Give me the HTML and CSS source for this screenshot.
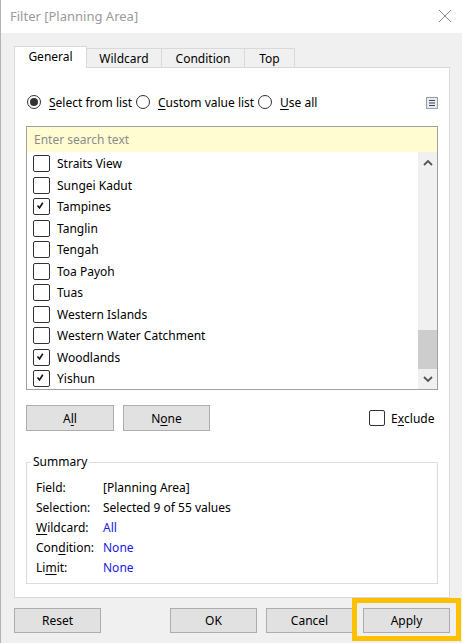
FILE: index.html
```html
<!DOCTYPE html>
<html>
<head>
<meta charset="utf-8">
<link rel="stylesheet" href="styles.css">
</head>
<body>
<div class="window">
  <div class="titlebar">
    <span class="title">Filter [Planning Area]</span>
    <svg class="close" width="14" height="14" viewBox="0 0 14 14"><path d="M1 1 L13 13 M13 1 L1 13" stroke="#8a8a8a" stroke-width="1" fill="none"/></svg>
  </div>
  <div class="content">
    <div class="tabs">
      <div class="tab active t-general">General</div>
      <div class="tab t-wild">Wildcard</div>
      <div class="tab t-cond">Condition</div>
      <div class="tab t-top">Top</div>
    </div>
    <div class="panel">
      <div class="radio-row">
        <label class="opt opt1"><span class="radio on"></span><span><u>S</u>elect from list</span></label>
        <label class="opt opt2"><span class="radio"></span><span><u>C</u>ustom value list</span></label>
        <label class="opt opt3"><span class="radio"></span><span><u>U</u>se all</span></label>
        <svg class="menu-icon" width="12" height="12" viewBox="0 0 12 12"><rect x="0.5" y="0.5" width="11" height="11" fill="#e6e9ee" stroke="#9aa0a8"/><path d="M3 3.5 H9 M3 6 H9 M3 8.5 H9" stroke="#3c4a5c" stroke-width="1.2"/></svg>
      </div>
      <div class="listbox">
        <div class="search">Enter search text</div>
        <div class="list-area">
          <div class="items">
            <div class="item"><span class="cb"></span>Straits View</div>
            <div class="item"><span class="cb"></span>Sungei Kadut</div>
            <div class="item"><span class="cb checked"><svg viewBox="0 0 15 15" width="15" height="15"><path d="M3.5 6.5 L5.5 9 L8.8 3.8" stroke="#111" stroke-width="1.6" fill="none"/></svg></span>Tampines</div>
            <div class="item"><span class="cb"></span>Tanglin</div>
            <div class="item"><span class="cb"></span>Tengah</div>
            <div class="item"><span class="cb"></span>Toa Payoh</div>
            <div class="item"><span class="cb"></span>Tuas</div>
            <div class="item"><span class="cb"></span>Western Islands</div>
            <div class="item"><span class="cb"></span>Western Water Catchment</div>
            <div class="item"><span class="cb checked"><svg viewBox="0 0 15 15" width="15" height="15"><path d="M3.5 6.5 L5.5 9 L8.8 3.8" stroke="#111" stroke-width="1.6" fill="none"/></svg></span>Woodlands</div>
            <div class="item"><span class="cb checked"><svg viewBox="0 0 15 15" width="15" height="15"><path d="M3.5 6.5 L5.5 9 L8.8 3.8" stroke="#111" stroke-width="1.6" fill="none"/></svg></span>Yishun</div>
          </div>
          <div class="scrollbar">
            <div class="sb-btn"><svg width="10" height="7" viewBox="0 0 10 7"><path d="M1 6 L5 2 L9 6" stroke="#555" stroke-width="1.8" fill="none"/></svg></div>
            <div class="sb-track"><div class="sb-thumb"></div></div>
            <div class="sb-btn"><svg width="10" height="7" viewBox="0 0 10 7"><path d="M1 1 L5 5 L9 1" stroke="#555" stroke-width="1.8" fill="none"/></svg></div>
          </div>
        </div>
      </div>
      <div class="btn-row">
        <div class="btn btn-all">A<u>l</u>l</div>
        <div class="btn btn-none">N<u>o</u>ne</div>
        <label class="exclude"><span class="cb cb-ex"></span>E<u>x</u>clude</label>
      </div>
      <fieldset class="summary">
        <legend>Summary</legend>
        <div class="sum-rows">
          <div class="sum-row"><span class="sum-label">Field:</span><span>[Planning Area]</span></div>
          <div class="sum-row"><span class="sum-label">Selection:</span><span>Selected 9 of 55 values</span></div>
          <div class="sum-row"><span class="sum-label"><u>W</u>ildcard:</span><span class="blue">All</span></div>
          <div class="sum-row"><span class="sum-label">Con<u>d</u>ition:</span><span class="blue">None</span></div>
          <div class="sum-row"><span class="sum-label">Li<u>m</u>it:</span><span class="blue">None</span></div>
        </div>
      </fieldset>
    </div>
    <div class="footer">
      <div class="btn fbtn">Reset</div>
      <div class="spacer"></div>
      <div class="btn fbtn">OK</div>
      <div class="btn fbtn btn-cancel">Cancel</div>
      <div class="btn fbtn btn-apply">Apply</div>
    </div>
  </div>
</div>
</body>
</html>
```

FILE: styles.css
```css
* { box-sizing: border-box; }
html, body { margin: 0; padding: 0; }
body {
  width: 462px;
  height: 643px;
  overflow: hidden;
  background: #f0f0f0;
  font-family: "Noto Sans", "Open Sans", sans-serif;
  font-size: 12px;
  color: #000;
}
u { text-decoration: underline; text-underline-offset: 2px; }
.window {
  height: 643px;
  border-left: 1px solid #b4b4b4;
  display: flex;
  flex-direction: column;
}
.titlebar {
  height: 33px;
  flex: none;
  background: #fff;
  display: flex;
  align-items: center;
  padding: 0 10px 2px 9px;
}
.title { color: #9a9a9a; font-size: 13px; }
.close { margin-left: auto; margin-top: 1px; }
.content {
  flex: 1;
  padding: 13px 12px 0 13px;
  display: flex;
  flex-direction: column;
}
.tabs {
  display: flex;
  align-items: flex-end;
  height: 22px;
  margin-bottom: -1px;
  position: relative;
  z-index: 1;
}
.tab {
  height: 19px;
  margin-bottom: 1px;
  border-top: 1px solid #d9d9d9;
  border-right: 1px solid #d9d9d9;
  background: #f0f0f0;
  display: flex;
  align-items: center;
  justify-content: center;
  padding-top: 1px;
}
.tab.active {
  height: 22px;
  margin-bottom: 0;
  background: #fff;
  border-left: 1px solid #d9d9d9;
  padding-top: 0;
  padding-bottom: 2px;
}
.t-general { width: 73px; }
.t-wild { width: 75px; }
.t-cond { width: 83px; }
.t-top { width: 50px; }
.panel {
  height: 531px;
  flex: none;
  background: #fff;
  border: 1px solid #d9d9d9;
  padding: 24px 11px 0 11px;
}
.radio-row {
  height: 20px;
  display: flex;
  align-items: center;
  padding-left: 1px;
}
.opt { display: flex; align-items: center; }
.opt1 { width: 109px; }
.opt2 { width: 122px; }
.opt3 { width: 80px; }
.radio {
  width: 14px;
  height: 14px;
  border: 1px solid #333;
  border-radius: 50%;
  margin-right: 8px;
  flex: none;
  display: flex;
  align-items: center;
  justify-content: center;
}
.radio.on::after {
  content: "";
  width: 8px;
  height: 8px;
  border-radius: 50%;
  background: #333;
}
.menu-icon { margin-left: auto; margin-top: 1px; }
.listbox {
  margin-top: 14px;
  height: 264px;
  border: 1px solid #a0a0a0;
  display: flex;
  flex-direction: column;
}
.search {
  height: 25px;
  flex: none;
  background: #fffcd2;
  color: #8c8c8c;
  padding-left: 7px;
  display: flex;
  align-items: center;
}
.list-area { flex: 1; display: flex; overflow: hidden; }
.items { flex: 1; padding-left: 6px; padding-top: 1px; }
.item {
  height: 21.5px;
  display: flex;
  align-items: center;
}
.cb {
  width: 17px;
  height: 17px;
  border: 1px solid #333;
  border-radius: 2px;
  margin-right: 7px;
  flex: none;
  display: block;
}
.cb svg { display: block; }
.scrollbar {
  width: 19px;
  background: #f0f0f0;
  display: flex;
  flex-direction: column;
}
.sb-btn {
  height: 20px;
  flex: none;
  display: flex;
  align-items: center;
  justify-content: center;
}
.sb-track {
  flex: 1;
  display: flex;
  flex-direction: column;
  justify-content: flex-end;
}
.sb-thumb { height: 39px; background: #cdcdcd; }
.btn-row {
  margin-top: 15px;
  height: 26px;
  display: flex;
  align-items: center;
}
.btn {
  background: #e1e1e1;
  border: 1px solid #adadad;
  display: flex;
  align-items: center;
  justify-content: center;
  color: #000;
}
.btn-all { width: 88px; height: 26px; }
.btn-none { width: 87px; height: 26px; margin-left: 9px; }
.exclude { display: flex; align-items: center; margin-left: 159px; }
.cb-ex { width: 16px; height: 16px; margin-right: 6px; }
.summary {
  margin: 23px 0 0 0;
  border: 1px solid #dcdcdc;
  padding: 0 0 6px 4px;
  min-width: 0;
}
.summary legend {
  padding: 0 2px;
  line-height: 16px;
}
.sum-rows { padding-top: 7px; padding-left: 5px; }
.sum-row { height: 20px; display: flex; align-items: center; }
.sum-label { width: 67px; }
.blue { color: #1a1ae0; }
.footer {
  margin-top: 10px;
  display: flex;
  height: 25px;
}
.fbtn { width: 87px; height: 25px; }
.spacer { flex: 1; }
.btn-cancel { margin-left: 9px; }
.btn-apply { margin-left: 10px; position: relative; }
.btn-apply::after {
  content: "";
  position: absolute;
  top: -11px;
  bottom: -9px;
  left: -12px;
  right: -12px;
  border: 5px solid #ffc000;
}
```
